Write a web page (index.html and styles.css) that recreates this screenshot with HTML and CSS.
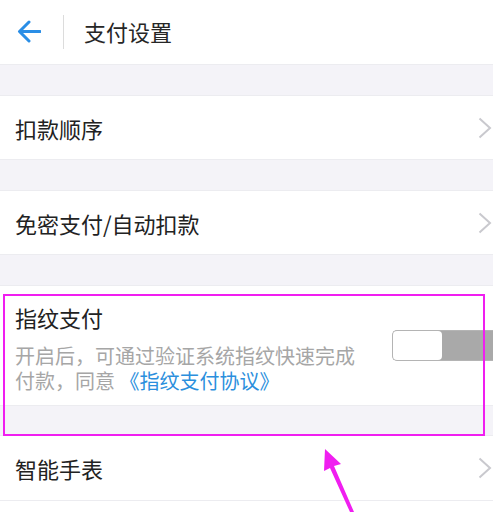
FILE: index.html
```html
<!DOCTYPE html>
<html lang="zh">
<head>
<meta charset="utf-8">
<link rel="stylesheet" href="styles.css">
</head>
<body>
<div class="page">
  <header class="topbar">
    <svg class="back" width="24" height="24" viewBox="0 0 24 24">
      <path d="M3 11.5 H23 M12 2 L2.5 11.5 L12 21" fill="none" stroke="#2a8ee6" stroke-width="3" stroke-linecap="round" stroke-linejoin="round"/>
    </svg>
    <span class="divider"></span>
    <h1 class="title">支付设置</h1>
  </header>

  <div class="gap g31"></div>
  <div class="row">
    <span class="label">扣款顺序</span>
    <svg class="chev" width="14" height="22" viewBox="0 0 14 22"><path d="M1.5 1.5 L12 11 L1.5 20.5" fill="none" stroke="#c9c9ce" stroke-width="2"/></svg>
  </div>

  <div class="gap g30"></div>
  <div class="row">
    <span class="label">免密支付/自动扣款</span>
    <svg class="chev" width="14" height="22" viewBox="0 0 14 22"><path d="M1.5 1.5 L12 11 L1.5 20.5" fill="none" stroke="#c9c9ce" stroke-width="2"/></svg>
  </div>

  <div class="gap g31"></div>
  <div class="row tall">
    <div class="info">
      <div class="label">指纹支付</div>
      <p class="desc">开启后，可通过验证系统指纹快速完成付款，同意 <span class="link">《指纹支付协议》</span></p>
    </div>
    <div class="toggle"><span class="knob"></span></div>
  </div>

  <div class="gap g29"></div>
  <div class="row last">
    <span class="label">智能手表</span>
    <svg class="chev" width="14" height="22" viewBox="0 0 14 22"><path d="M1.5 1.5 L12 11 L1.5 20.5" fill="none" stroke="#c9c9ce" stroke-width="2"/></svg>
  </div>

  <div class="highlight"></div>
  <svg class="pointer" width="493" height="512" viewBox="0 0 493 512">
    <polygon points="325,449 341,464 334,466 354,512 350,512 330,468 324,471" fill="#f01ef0"/>
  </svg>
</div>
</body>
</html>
```

FILE: styles.css
```css
* { box-sizing: border-box; margin: 0; padding: 0; }
html, body { width: 493px; height: 512px; overflow: hidden; }
body {
  background: #ffffff;
  font-family: "Noto Sans CJK SC", "Noto Sans", sans-serif;
  color: #222;
}
.page { position: relative; width: 493px; height: 512px; background: #fff; }

.topbar {
  height: 65px;
  display: flex;
  align-items: center;
  padding-left: 17px;
  background: #fff;
  border-bottom: 1px solid #ececf0;
}
.back { display: block; }
.divider {
  width: 1px;
  height: 34px;
  background: #dcdcdc;
  margin-left: 22px;
}
.title {
  margin-left: 20px;
  margin-bottom: 3px;
  font-size: 22px;
  font-weight: 400;
  color: #262626;
  line-height: 30px;
}

.gap { background: #f4f3f8; }
.g31 { height: 30px; }
.g30 { height: 30px; }
.g29 { height: 29px; }

.row {
  height: 65px;
  display: flex;
  align-items: center;
  justify-content: space-between;
  padding-left: 15px;
  padding-right: 1px;
  background: #fff;
  border-top: 1px solid #ececf0;
  border-bottom: 1px solid #ececf0;
}
.label {
  font-size: 22px;
  line-height: 28px;
  color: #222;
}
.chev { display: block; }

.row.tall {
  height: 121px;
  padding-right: 0;
  align-items: center;
}
.info { width: 350px; padding-top: 4px; }
.desc {
  margin-top: 12px;
  font-size: 20px;
  line-height: 25px;
  color: #a6a6a6;
}
.link { color: #2b8fdd; }

.toggle {
  width: 101px;
  height: 31px;
  border: 1.5px solid #b4b4b4;
  border-right: none;
  border-radius: 5px 0 0 5px;
  background: #a9a9a9;
  display: flex;
}
.knob {
  width: 49px;
  height: 100%;
  background: #fff;
  border-radius: 4px;
}

.row.last { height: 66px; }

.highlight {
  position: absolute;
  left: 3px;
  top: 294px;
  width: 482px;
  height: 142px;
  border: 2.5px solid #f01ef0;
}
.pointer {
  position: absolute;
  left: 0;
  top: 0;
  pointer-events: none;
}
```
